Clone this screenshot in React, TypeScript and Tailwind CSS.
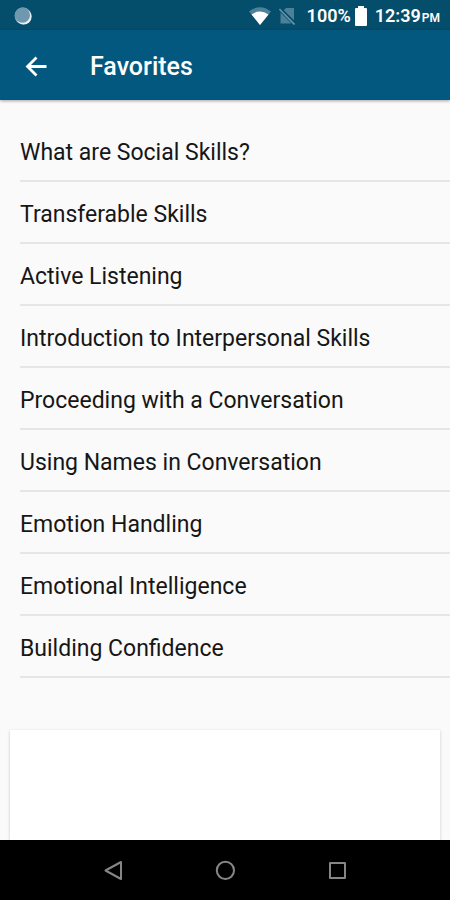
const favorites = [
  'What are Social Skills?',
  'Transferable Skills',
  'Active Listening',
  'Introduction to Interpersonal Skills',
  'Proceeding with a Conversation',
  'Using Names in Conversation',
  'Emotion Handling',
  'Emotional Intelligence',
  'Building Confidence',
];

function StatusBar() {
  return (
    <div className="flex h-[30px] shrink-0 items-center justify-between bg-[#044d6b] pt-px pr-2.5 pl-3.5 text-white">
      <svg width="18" height="18" viewBox="0 0 18 18" aria-hidden="true">
        <circle cx="9" cy="9" r="8.4" fill="#8fb0c0" />
        <circle cx="9.8" cy="9.8" r="7.8" fill="#e6eff3" />
        <circle cx="8.4" cy="8.2" r="7.6" fill="#6d98ad" />
      </svg>
      <div className="flex items-center">
        <svg className="mr-2" width="22" height="18" viewBox="0 0 22 18" aria-hidden="true">
          <path d="M0 4.5Q11-4 22 4.5L11 18Z" fill="#4f8299" />
          <path d="M2.5 7.5Q11 1.5 19.5 7.5L11 18Z" fill="#fff" />
        </svg>
        <svg className="mr-3" width="16" height="18" viewBox="0 0 16 18" aria-hidden="true">
          <path d="M7 1h8v12.5L4.5 3.5Z" fill="#4b8098" />
          <path d="M1.5 5.5 12.5 16.5H1.5Z" fill="#4b8098" />
          <path d="M0.5 2 15.5 17.5" stroke="#6b97aa" strokeWidth="1.6" />
          <path d="M2 1.5 16 15.5" stroke="#044d6b" strokeWidth="1.4" />
        </svg>
        <span className="mr-1 text-lg leading-5 font-semibold">100%</span>
        <svg className="mr-2" width="12" height="20" viewBox="0 0 12 20" aria-hidden="true">
          <path d="M3 0h6v2h2q1 0 1 1v16q0 1-1 1H1q-1 0-1-1V3q0-1 1-1h2Z" fill="#fff" />
        </svg>
        <time className="flex items-baseline gap-px text-lg leading-5 font-semibold">
          12:39<span className="text-xs">PM</span>
        </time>
      </div>
    </div>
  );
}

function AppBar() {
  return (
    <header className="z-10 flex h-[70px] shrink-0 items-center bg-[#03587f] pt-1 pl-5 text-white shadow-[0_1px_3px_rgba(0,0,0,0.35)]">
      <button type="button" aria-label="Back" className="flex size-8 items-center justify-center">
        <svg width="22" height="22" viewBox="0 0 22 22" fill="none" stroke="#fff" strokeWidth="2.8" aria-hidden="true">
          <path d="M21.5 10.5H3M11.5 1.5l-9 9 9 9" />
        </svg>
      </button>
      <h1 className="ml-[38px] text-[25px] font-medium">Favorites</h1>
    </header>
  );
}

function NavigationBar() {
  return (
    <nav className="flex h-[60px] shrink-0 items-center justify-center gap-20 bg-black text-[#868686]">
      <button type="button" aria-label="Back" className="flex size-8 items-center justify-center">
        <svg width="20" height="20" viewBox="0 0 20 20" fill="none" stroke="currentColor" strokeWidth="2" strokeLinejoin="round" aria-hidden="true">
          <path d="M18 2v17L2.5 10.5Z" />
        </svg>
      </button>
      <button type="button" aria-label="Home" className="flex size-8 items-center justify-center">
        <svg width="20" height="20" viewBox="0 0 20 20" fill="none" stroke="currentColor" strokeWidth="2" aria-hidden="true">
          <circle cx="10.4" cy="10.4" r="8.6" />
        </svg>
      </button>
      <button type="button" aria-label="Recent apps" className="flex size-8 items-center justify-center">
        <svg width="20" height="20" viewBox="0 0 20 20" fill="none" stroke="currentColor" strokeWidth="2" strokeLinejoin="round" aria-hidden="true">
          <path d="M3 3h15v15H3Z" />
        </svg>
      </button>
    </nav>
  );
}

export default function App() {
  return (
    <div className="flex min-h-screen flex-col bg-[#fafafa] font-[Roboto,sans-serif] text-[#161616]">
      <StatusBar />
      <AppBar />
      <main className="flex flex-1 flex-col overflow-hidden pt-5">
        <ul className="pl-5">
          {favorites.map((title) => (
            <li key={title} className="border-b-2 border-[#e6e6e6]">
              <button type="button" className="flex h-[60px] w-full items-center pt-1.5 text-left text-[23px] leading-7">
                {title}
              </button>
            </li>
          ))}
        </ul>
        <div className="mx-2.5 mt-[52px] flex-1 bg-white shadow-[0_1px_3px_rgba(0,0,0,0.2)]" />
      </main>
      <NavigationBar />
    </div>
  );
}
